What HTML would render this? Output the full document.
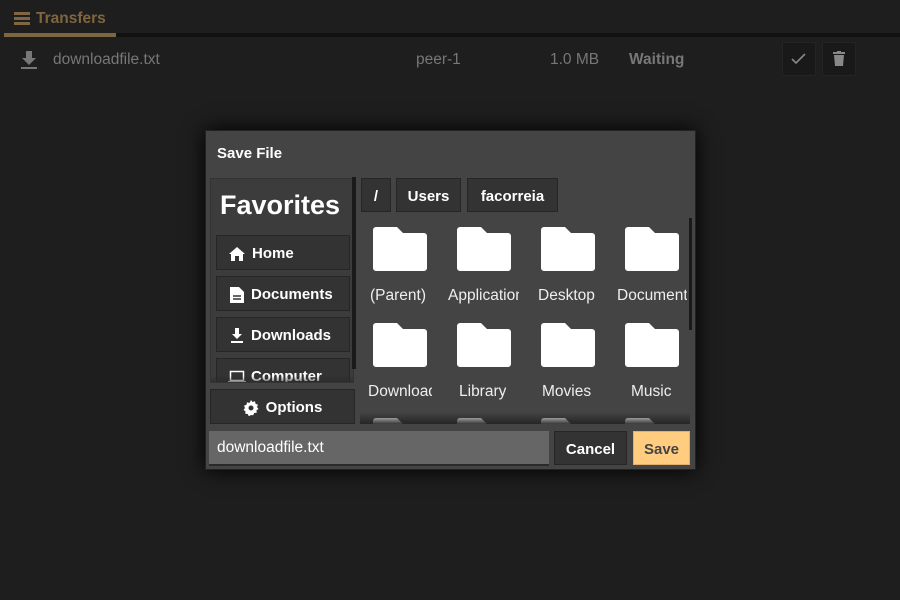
<!DOCTYPE html>
<html><head><meta charset="utf-8"><style>
*{box-sizing:border-box;margin:0;padding:0}
body{width:900px;height:600px;background:#1e1e1e;font-family:"Liberation Sans",sans-serif;position:relative;overflow:hidden;color:#fff}
.a{position:absolute}
.btn{position:absolute;background:#333;border:1px solid #262626;font-weight:bold;font-size:15px;color:#fff;display:flex;align-items:center;padding-top:2px}
.lbl{position:absolute;font-size:15.5px;color:#eee;white-space:nowrap;overflow:hidden}
</style></head><body>
<div class="a" style="left:14px;top:12px;width:16px;height:14px">
<div class="a" style="left:0;top:0;width:16px;height:3px;background:#7f6540"></div>
<div class="a" style="left:0;top:5px;width:16px;height:3px;background:#7f6540"></div>
<div class="a" style="left:0;top:10px;width:16px;height:3px;background:#7f6540"></div>
</div>
<div class="a" style="left:36px;top:10px;font-size:15.5px;font-weight:bold;color:#7f6540">Transfers</div>
<div class="a" style="left:4px;top:33px;width:896px;height:4px;background:#111"></div>
<div class="a" style="left:4px;top:33px;width:112px;height:4px;background:#7f6540"></div>
<svg class="a" style="left:20px;top:51px" width="18" height="20" viewBox="0 0 18 20"><path d="M6 0h6v7h4l-7 7-7-7h4z" fill="#777"/><rect x="1" y="16" width="16" height="2" fill="#777"/></svg>
<div class="a" style="left:53px;top:51px;font-size:15.5px;color:#777">downloadfile.txt</div>
<div class="a" style="left:416px;top:51px;font-size:15.5px;color:#777">peer-1</div>
<div class="a" style="left:550px;top:51px;font-size:15.5px;color:#777">1.0 MB</div>
<div class="a" style="left:629px;top:51px;font-size:15.5px;color:#777;font-weight:bold">Waiting</div>
<div class="a" style="left:782px;top:42px;width:34px;height:34px;background:#191919;border:1px solid #242424"></div>
<svg class="a" style="left:791px;top:53px" width="16" height="12"><path d="M1 6l4 4 9-9" stroke="#888" stroke-width="1.6" fill="none"/></svg>
<div class="a" style="left:822px;top:42px;width:34px;height:34px;background:#191919;border:1px solid #242424"></div>
<svg class="a" style="left:833px;top:51px" width="12" height="16"><rect x="0" y="1" width="12" height="2" fill="#888"/><rect x="4" y="0" width="4" height="2" fill="#888"/><path d="M1 4h10l-1 11H2z" fill="#888"/></svg>

<div class="a" style="left:205px;top:130px;width:491px;height:340px;background:#444;border:1px solid #222;box-shadow:0 0 20px #000"></div>
<div class="a" style="left:217px;top:145px;font-size:15px;font-weight:bold">Save File</div>
<div class="a" style="left:210px;top:178px;width:144px;height:205px;background:#3c3c3c;border:1px solid #333;overflow:hidden">
<div class="a" style="left:9px;top:11px;font-size:27px;font-weight:bold">Favorites</div>
<div class="btn" style="left:5px;top:56px;width:134px;height:35px;padding-left:12px">
<svg width="16" height="14" style="margin-right:7px"><path d="M8 0l8 7h-2v7h-4v-5h-4v5h-4v-7h-2z" fill="#fff"/></svg>Home</div>
<div class="btn" style="left:5px;top:97px;width:134px;height:35px;padding-left:13px">
<svg width="14" height="16" style="margin-right:7px"><path d="M0 0h9l5 5v11h-14z" fill="#fff"/><path d="M3 9h8M3 12h8" stroke="#333" stroke-width="1.5"/></svg>Documents</div>
<div class="btn" style="left:5px;top:138px;width:134px;height:35px;padding-left:13px">
<svg width="14" height="16" style="margin-right:7px"><path d="M5 0h4v6h3l-5 5-5-5h3z" fill="#fff"/><rect x="1" y="13" width="12" height="2" fill="#fff"/></svg>Downloads</div>
<div class="btn" style="left:5px;top:179px;width:134px;height:35px;padding-left:11px;align-items:flex-start;padding-top:9px">
<svg width="18" height="14" style="margin-right:5px;margin-top:2px"><rect x="2.5" y="1.5" width="13" height="9" stroke="#fff" fill="none" stroke-width="1.5"/><rect x="0" y="11" width="18" height="2" fill="#fff"/></svg>Computer</div>
<div class="a" style="left:0;top:197px;width:144px;height:8px;background:linear-gradient(rgba(40,40,40,0),rgba(40,40,40,.8))"></div>
</div>
<div class="a" style="left:352px;top:177px;width:4px;height:192px;background:#1a1a1a"></div>
<div class="btn" style="left:210px;top:389px;width:145px;height:35px;justify-content:center">
<svg width="16" height="16" style="margin-right:7px" viewBox="0 0 16 16"><path d="M8 0l1.5 2 2.5-.7.5 2.5 2.5 1-1 2.2 1.5 2-2 1.3.2 2.5-2.5.2-1 2.3L8 15l-2.2 1.3-1-2.3-2.5-.2.2-2.5-2-1.3L2 8 1 5.8l2.5-1 .5-2.5 2.5.7z" fill="#fff"/><circle cx="8" cy="8" r="2.5" fill="#333"/></svg>Options</div>

<div class="btn" style="left:361px;top:178px;width:30px;height:34px;justify-content:center">/</div>
<div class="btn" style="left:396px;top:178px;width:65px;height:34px;justify-content:center">Users</div>
<div class="btn" style="left:467px;top:178px;width:91px;height:34px;justify-content:center">facorreia</div>
<div class="a" style="left:689px;top:218px;width:3px;height:112px;background:#1a1a1a"></div>

<svg class="a" style="left:360px;top:216px" width="330" height="208">
<defs><path id="f" d="M3 0h21l6 6h21a3 3 0 0 1 3 3v32a3 3 0 0 1-3 3h-48a3 3 0 0 1-3-3v-38a3 3 0 0 1 3-3z" fill="#fff"/>
<linearGradient id="sh" x1="0" y1="0" x2="0" y2="1"><stop offset="0" stop-color="#222" stop-opacity="0"/><stop offset="1" stop-color="#222" stop-opacity=".9"/></linearGradient></defs>
<use href="#f" x="13" y="11"/><use href="#f" x="97" y="11"/><use href="#f" x="181" y="11"/><use href="#f" x="265" y="11"/>
<use href="#f" x="13" y="107"/><use href="#f" x="97" y="107"/><use href="#f" x="181" y="107"/><use href="#f" x="265" y="107"/>
<use href="#f" x="13" y="202"/><use href="#f" x="97" y="202"/><use href="#f" x="181" y="202"/><use href="#f" x="265" y="202"/>
<rect x="0" y="196" width="330" height="12" fill="url(#sh)"/>
</svg>
<div class="lbl" style="left:370px;top:287px">(Parent)</div>
<div class="lbl" style="left:448px;top:287px;width:71px">Applications</div>
<div class="lbl" style="left:538px;top:287px">Desktop</div>
<div class="lbl" style="left:617px;top:287px;width:70px">Documents</div>
<div class="lbl" style="left:368px;top:383px;width:64px">Downloads</div>
<div class="lbl" style="left:459px;top:383px">Library</div>
<div class="lbl" style="left:542px;top:383px">Movies</div>
<div class="lbl" style="left:631px;top:383px">Music</div>

<div class="a" style="left:209px;top:431px;width:340px;height:35px;background:#666;border-bottom:2px solid #2a2a2a;font-size:15.5px;color:#fff;padding:8px 8px">downloadfile.txt</div>
<div class="btn" style="left:554px;top:431px;width:73px;height:34px;justify-content:center">Cancel</div>
<div class="btn" style="left:633px;top:431px;width:57px;height:34px;justify-content:center;background:#ffcc80;color:#444;border-color:#e0b070">Save</div>
</body></html>
